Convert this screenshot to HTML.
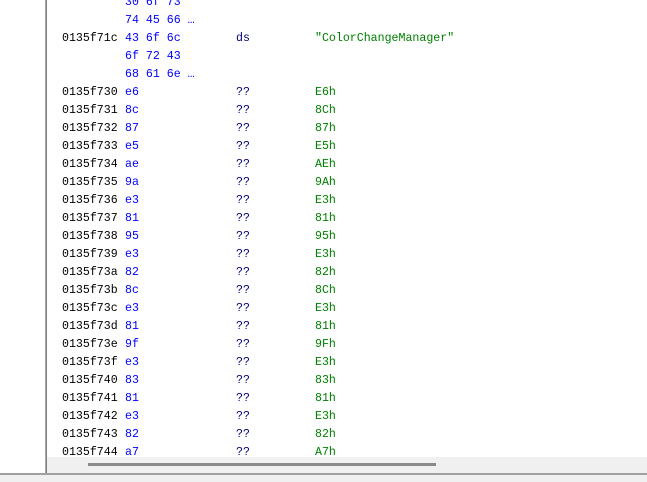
<!DOCTYPE html>
<html><head><style>
body{margin:0;width:647px;height:482px;background:#fff;position:relative;overflow:hidden;font-family:"Liberation Mono",monospace;font-size:11.6px;}
#w{position:absolute;left:0;top:2px;width:647px;height:455px}
.r{position:absolute;left:0;height:18px;line-height:18px;white-space:pre;}
.a{position:absolute;left:62px;color:#000}
.b{position:absolute;left:125px;color:#0000ff}
.d{position:absolute;left:236px;color:#000080}
.v{position:absolute;left:315px;color:#008000}
</style></head><body>
<div style="position:absolute;left:45px;top:0;width:1px;height:474px;background:#a8a8a8"></div>
<div style="position:absolute;left:46px;top:0;width:1px;height:474px;background:#808080"></div>
<div id="w">
<div class="r" style="top:-8px"><span class="b">30 6f 73</span></div>
<div class="r" style="top:10px"><span class="b">74 45 66 …</span></div>
<div class="r" style="top:28px"><span class="a">0135f71c</span><span class="b">43 6f 6c</span><span class="d">ds</span><span class="v">"ColorChangeManager"</span></div>
<div class="r" style="top:46px"><span class="b">6f 72 43</span></div>
<div class="r" style="top:64px"><span class="b">68 61 6e …</span></div>
<div class="r" style="top:82px"><span class="a">0135f730</span><span class="b">e6</span><span class="d">??</span><span class="v">E6h</span></div>
<div class="r" style="top:100px"><span class="a">0135f731</span><span class="b">8c</span><span class="d">??</span><span class="v">8Ch</span></div>
<div class="r" style="top:118px"><span class="a">0135f732</span><span class="b">87</span><span class="d">??</span><span class="v">87h</span></div>
<div class="r" style="top:136px"><span class="a">0135f733</span><span class="b">e5</span><span class="d">??</span><span class="v">E5h</span></div>
<div class="r" style="top:154px"><span class="a">0135f734</span><span class="b">ae</span><span class="d">??</span><span class="v">AEh</span></div>
<div class="r" style="top:172px"><span class="a">0135f735</span><span class="b">9a</span><span class="d">??</span><span class="v">9Ah</span></div>
<div class="r" style="top:190px"><span class="a">0135f736</span><span class="b">e3</span><span class="d">??</span><span class="v">E3h</span></div>
<div class="r" style="top:208px"><span class="a">0135f737</span><span class="b">81</span><span class="d">??</span><span class="v">81h</span></div>
<div class="r" style="top:226px"><span class="a">0135f738</span><span class="b">95</span><span class="d">??</span><span class="v">95h</span></div>
<div class="r" style="top:244px"><span class="a">0135f739</span><span class="b">e3</span><span class="d">??</span><span class="v">E3h</span></div>
<div class="r" style="top:262px"><span class="a">0135f73a</span><span class="b">82</span><span class="d">??</span><span class="v">82h</span></div>
<div class="r" style="top:280px"><span class="a">0135f73b</span><span class="b">8c</span><span class="d">??</span><span class="v">8Ch</span></div>
<div class="r" style="top:298px"><span class="a">0135f73c</span><span class="b">e3</span><span class="d">??</span><span class="v">E3h</span></div>
<div class="r" style="top:316px"><span class="a">0135f73d</span><span class="b">81</span><span class="d">??</span><span class="v">81h</span></div>
<div class="r" style="top:334px"><span class="a">0135f73e</span><span class="b">9f</span><span class="d">??</span><span class="v">9Fh</span></div>
<div class="r" style="top:352px"><span class="a">0135f73f</span><span class="b">e3</span><span class="d">??</span><span class="v">E3h</span></div>
<div class="r" style="top:370px"><span class="a">0135f740</span><span class="b">83</span><span class="d">??</span><span class="v">83h</span></div>
<div class="r" style="top:388px"><span class="a">0135f741</span><span class="b">81</span><span class="d">??</span><span class="v">81h</span></div>
<div class="r" style="top:406px"><span class="a">0135f742</span><span class="b">e3</span><span class="d">??</span><span class="v">E3h</span></div>
<div class="r" style="top:424px"><span class="a">0135f743</span><span class="b">82</span><span class="d">??</span><span class="v">82h</span></div>
<div class="r" style="top:442px"><span class="a">0135f744</span><span class="b">a7</span><span class="d">??</span><span class="v">A7h</span></div>
</div>
<div style="position:absolute;left:47px;top:457px;width:600px;height:16px;background:#f0f0f0"></div>
<div style="position:absolute;left:88px;top:463px;width:348px;height:3px;background:#8a8a8a"></div>
<div style="position:absolute;left:0;top:473px;width:647px;height:2px;background:#a0a0a0"></div>
<div style="position:absolute;left:0;top:475px;width:647px;height:7px;background:#f0f0f0"></div>
</body></html>
